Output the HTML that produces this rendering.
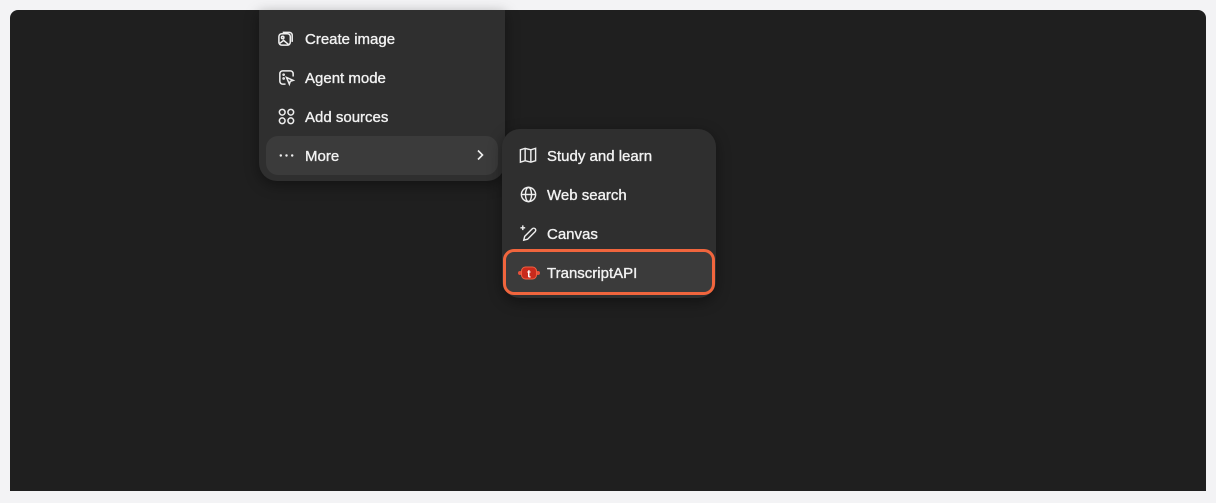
<!DOCTYPE html>
<html><head><meta charset="utf-8"><style>
*{margin:0;padding:0;box-sizing:border-box}
body{width:1216px;height:503px;background:#f3f3f5;position:relative;overflow:hidden;font-family:"Liberation Sans",sans-serif;}
.panel{position:absolute;left:10px;top:10px;width:1196px;height:481px;background:#1f1f1f;border-radius:8px 8px 0 0;}
.menu{position:absolute;background:#2f2f2f;border-radius:18px;box-shadow:0 4px 14px rgba(0,0,0,.4);}
.item{position:absolute;height:39px;display:flex;align-items:center;color:#f2f2f2;font-size:15px;-webkit-text-stroke:0.35px #f2f2f2;}
.item span{top:12px}
.item svg{position:absolute;}
.hl{background:#3b3b3b;border-radius:12px;}
</style></head><body>
<div class="panel"></div>
<div class="menu" style="left:259px;top:10px;width:246px;height:171px;border-radius:0 0 18px 18px;">
</div>
<div style="position:absolute;left:259px;top:0;width:246px;">
  <div class="item" style="left:7px;top:19px;width:232px;">
    <svg style="left:11px" width="19" height="19" viewBox="0 0 20 20" fill="none" stroke="#eee" stroke-width="1.6"><rect x="2" y="5" width="12" height="12" rx="3"/><path d="M6 3.5h7a3 3 0 0 1 3 3v7"/><circle cx="6" cy="9" r="1.3"/><path d="M3 15l4-3 6 5"/></svg>
    <span style="position:absolute;left:39px">Create image</span></div>
  <div class="item" style="left:7px;top:58px;width:232px;">
    <svg style="left:11px" width="19" height="19" viewBox="0 0 20 20" fill="none" stroke="#eee" stroke-width="1.6"><path d="M9 17H6a3 3 0 0 1-3-3V6a3 3 0 0 1 3-3h8a3 3 0 0 1 3 3v3"/><path d="M10 10l7 3-3 1-1 3z"/><circle cx="7" cy="7" r=".6"/><circle cx="7" cy="11" r=".6"/></svg>
    <span style="position:absolute;left:39px">Agent mode</span></div>
  <div class="item" style="left:7px;top:97px;width:232px;">
    <svg style="left:11px" width="19" height="19" viewBox="0 0 20 20" fill="none" stroke="#eee" stroke-width="1.6"><circle cx="5.5" cy="5.5" r="3"/><circle cx="14.5" cy="14.5" r="3"/><circle cx="5.5" cy="14.5" r="3"/><circle cx="14.5" cy="5.5" r="3"/></svg>
    <span style="position:absolute;left:39px">Add sources</span></div>
  <div class="item hl" style="left:7px;top:136px;width:232px;">
    <svg style="left:11px" width="19" height="19" viewBox="0 0 20 20" fill="#eee"><circle cx="4" cy="10" r="1.3"/><circle cx="10" cy="10" r="1.3"/><circle cx="16" cy="10" r="1.3"/></svg>
    <span style="position:absolute;left:39px">More</span>
    <svg style="left:207px;top:12px" width="14" height="14" viewBox="0 0 14 14" fill="none" stroke="#eee" stroke-width="1.6"><path d="M5 2.5l4.5 4.5L5 11.5"/></svg></div>
</div>
<div class="menu" style="left:502px;top:129px;width:214px;height:169px;">
  <div class="item" style="left:0;top:7px;width:214px;">
    <svg style="left:16px" width="20" height="19" viewBox="0 0 20 20" fill="none" stroke="#eee" stroke-width="1.5"><path d="M2 4l5-1.5 6 1.5 5-1.5v13L13 17l-6-1.5L2 17z"/><path d="M7 2.5v13M13 4v13"/></svg>
    <span style="position:absolute;left:45px">Study and learn</span></div>
  <div class="item" style="left:0;top:46px;width:214px;">
    <svg style="left:17px" width="19" height="19" viewBox="0 0 20 20" fill="none" stroke="#eee" stroke-width="1.5"><circle cx="10" cy="10" r="7.5"/><ellipse cx="10" cy="10" rx="3.2" ry="7.5"/><path d="M2.5 10h15"/></svg>
    <span style="position:absolute;left:45px">Web search</span></div>
  <div class="item" style="left:0;top:85px;width:214px;">
    <svg style="left:17px" width="19" height="19" viewBox="0 0 20 20" fill="none" stroke="#eee" stroke-width="1.5"><path d="M5 17l1-4 8-8a2 2 0 0 1 3 3l-8 8z"/><path d="M4 1.5v5M1.5 4h5"/></svg>
    <span style="position:absolute;left:45px">Canvas</span></div>
  <div style="position:absolute;left:1px;top:120px;width:212px;height:46px;border:3px solid #f0653d;border-radius:11px;background:#3b3b3b;"></div>
  <div class="item" style="left:0;top:124px;width:214px;">
    <svg style="left:15px" width="24" height="16" viewBox="0 0 24 16"><circle cx="3" cy="8" r="2" fill="#e8503a"/><circle cx="21" cy="8" r="2" fill="#e8503a"/><rect x="4.5" y="2" width="15" height="12" rx="4" fill="#c92a1c" stroke="#f06040"/><text x="12" y="12.5" font-size="11" font-weight="bold" fill="#fff" text-anchor="middle" font-family="Liberation Sans">t</text></svg>
    <span style="position:absolute;left:45px">TranscriptAPI</span></div>
</div>
</body></html>
